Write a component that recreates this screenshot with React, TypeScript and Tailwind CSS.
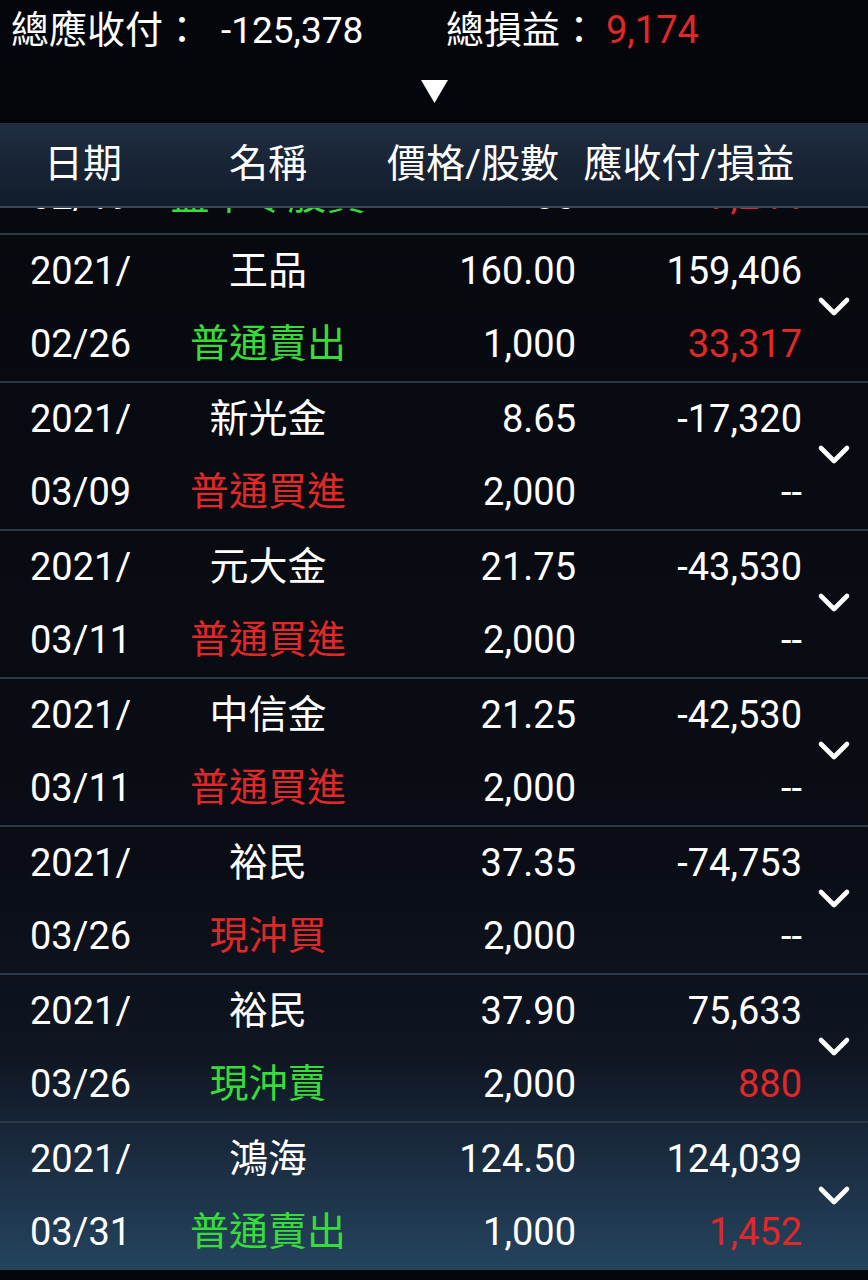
import React from 'react';

type Tone = 'white' | 'green' | 'red';

interface Trade {
  year: string;
  date: string;
  name: string;
  kind: string;
  kindTone: Tone;
  price: string;
  shares: string;
  amount: string;
  pnl: string;
  pnlTone: Tone;
}

const trades: Trade[] = [
  { year: '2021/', date: '02/19', name: '王品', kind: '盤中零股賣', kindTone: 'green', price: '50', shares: '50', amount: '7,244', pnl: '7,244', pnlTone: 'red' },
  { year: '2021/', date: '02/26', name: '王品', kind: '普通賣出', kindTone: 'green', price: '160.00', shares: '1,000', amount: '159,406', pnl: '33,317', pnlTone: 'red' },
  { year: '2021/', date: '03/09', name: '新光金', kind: '普通買進', kindTone: 'red', price: '8.65', shares: '2,000', amount: '-17,320', pnl: '--', pnlTone: 'white' },
  { year: '2021/', date: '03/11', name: '元大金', kind: '普通買進', kindTone: 'red', price: '21.75', shares: '2,000', amount: '-43,530', pnl: '--', pnlTone: 'white' },
  { year: '2021/', date: '03/11', name: '中信金', kind: '普通買進', kindTone: 'red', price: '21.25', shares: '2,000', amount: '-42,530', pnl: '--', pnlTone: 'white' },
  { year: '2021/', date: '03/26', name: '裕民', kind: '現沖買', kindTone: 'red', price: '37.35', shares: '2,000', amount: '-74,753', pnl: '--', pnlTone: 'white' },
  { year: '2021/', date: '03/26', name: '裕民', kind: '現沖賣', kindTone: 'green', price: '37.90', shares: '2,000', amount: '75,633', pnl: '880', pnlTone: 'red' },
  { year: '2021/', date: '03/31', name: '鴻海', kind: '普通賣出', kindTone: 'green', price: '124.50', shares: '1,000', amount: '124,039', pnl: '1,452', pnlTone: 'red' },
];

const toneClass: Record<Tone, string> = {
  white: 'text-white',
  green: 'text-[#38dc38]',
  red: 'text-[#e02828]',
};

const cols = 'grid grid-cols-[166px_204px_206px_226px_66px]';

function Chevron() {
  return (
    <svg width="34" height="22" viewBox="0 0 34 22" fill="none">
      <path d="M4 4 L17 17 L30 4" stroke="white" strokeWidth="4.6" strokeLinecap="round" strokeLinejoin="round" />
    </svg>
  );
}

function TradeRow({ t, first, last }: { t: Trade; first?: boolean; last?: boolean }) {
  return (
    <div
      className={`${cols} h-[148px] ${last ? '' : 'border-b-2 border-[#2c3846]'} ${first ? 'mt-[-121px]' : ''}`}
    >
      <div className="flex flex-col pl-[30px]">
        <div className="h-[73px] flex items-center">{t.year}</div>
        <div className="h-[73px] flex items-center">{t.date}</div>
      </div>
      <div className="flex flex-col items-center text-[39px]">
        <div className="h-[73px] flex items-center">{t.name}</div>
        <div className={`h-[73px] flex items-center ${toneClass[t.kindTone]}`}>{t.kind}</div>
      </div>
      <div className="flex flex-col items-end">
        <div className="h-[73px] flex items-center">{t.price}</div>
        <div className="h-[73px] flex items-center">{t.shares}</div>
      </div>
      <div className="flex flex-col items-end">
        <div className="h-[73px] flex items-center">{t.amount}</div>
        <div className={`h-[73px] flex items-center ${toneClass[t.pnlTone]}`}>{t.pnl}</div>
      </div>
      <div className="flex items-center justify-center pb-[2px] pr-[2px]">
        <Chevron />
      </div>
    </div>
  );
}

export default function App() {
  return (
    <div
      className="w-[868px] h-[1280px] overflow-hidden bg-[#05060c] text-white flex flex-col"
      style={{ fontFamily: 'Roboto, "Noto Sans CJK TC", sans-serif' }}
    >
      {/* summary */}
      <div className="h-[123px] shrink-0 flex flex-col">
        <div className="h-[60px] flex items-center text-[38px] leading-none">
          <div className="w-[446px] pl-[11px] flex items-center">
            <span>總應收付：</span>
            <span className="ml-[20px] text-[37px]">-125,378</span>
          </div>
          <div className="flex items-center">
            <span>總損益：</span>
            <span className="ml-[8px] text-[38px] text-[#e02828]">9,174</span>
          </div>
        </div>
        <div className="flex justify-center mt-[20px]">
          <svg width="27" height="23" viewBox="0 0 27 23">
            <path d="M0 0 H27 L13.5 23 Z" fill="white" />
          </svg>
        </div>
      </div>

      {/* column header */}
      <div className={`${cols} h-[85px] shrink-0 items-center text-[39px] bg-gradient-to-b from-[#1f2e42] to-[#121c2a] border-b-2 border-[#3a4858] relative z-10`}>
        <div className="text-center">日期</div>
        <div className="text-center">名稱</div>
        <div className="text-center">價格/股數</div>
        <div className="text-center">應收付/損益</div>
        <div />
      </div>

      {/* list */}
      <div className="h-[1062px] shrink-0 overflow-hidden text-[38px] bg-[linear-gradient(to_bottom,#07090f_0%,#0a0d15_62%,#0f1622_80%,#1a2b3f_89%,#24445e_100%)]">
        {trades.map((t, i) => (
          <TradeRow key={i} t={t} first={i === 0} last={i === trades.length - 1} />
        ))}
      </div>
    </div>
  );
}
